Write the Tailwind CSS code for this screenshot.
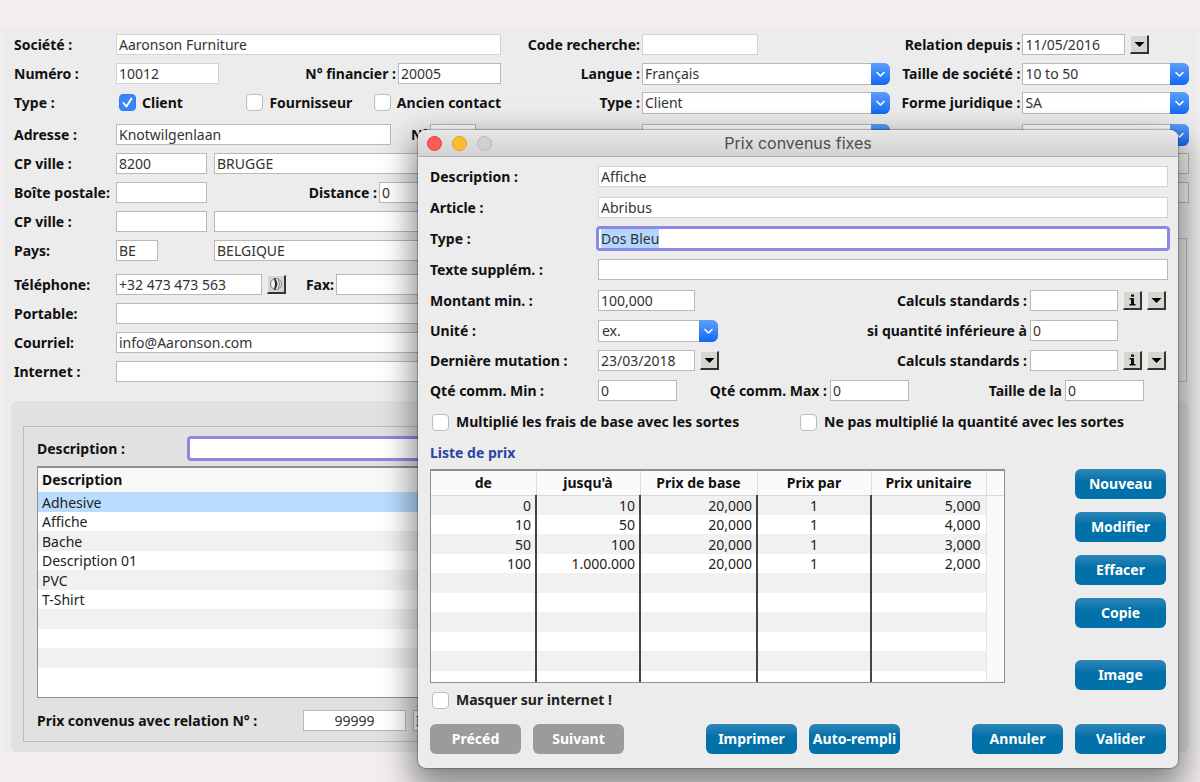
<!DOCTYPE html>
<html lang="fr">
<head>
<meta charset="utf-8">
<title>Prix convenus fixes</title>
<script src="https://cdn.jsdelivr.net/npm/@tailwindcss/browser@4"></script>
</head>
<body class="relative min-h-screen overflow-x-hidden bg-[#f2eeef] pt-7 font-['Noto_Sans',sans-serif] text-[14px] leading-5 text-[#111]">
<svg class="hidden">
  <symbol id="chev" viewBox="0 0 19 21"><path d="M6 9l3.500 3.500L13 9" fill="none" stroke="#fff" stroke-width="1.600" stroke-linecap="round" stroke-linejoin="round"/></symbol>
  <symbol id="down" viewBox="0 0 16 16"><path d="M3.500 6h10l-5 5z" fill="#000"/></symbol>
  <symbol id="info" viewBox="0 0 16 16"><path d="M7 2.500h3v2.200H7zM5.500 6H10v6h1.500v1.500h-6V12H7V7.500H5.500z" fill="#111"/></symbol>
  <symbol id="phone" viewBox="0 0 16 16"><circle cx="8" cy="8" r="5.500" fill="#f4f4f0" stroke="#777" stroke-width="1"/><path d="M6.500 2.500q5 5.500 0 11q2.200-5.500 0-11z" fill="#222" stroke="#222"/><path d="M10.500 4q2 4 0 8" stroke="#777" fill="none"/></symbol>
</svg>

<main class="mx-[2px] rounded-sm bg-[#ececec] px-[9px] pt-[6px] pb-[1px]">
  <form class="flex pl-[3px]">
    <section class="flex w-[487px] flex-none flex-col gap-2">
      <div class="flex h-[21px] items-center"><label for="soc" class="w-[102px] flex-none font-bold">Société :</label><input id="soc" value="Aaronson Furniture" class="h-[21px] w-full min-w-0 border border-[#d4d4d4] bg-white pl-[2px] text-[#333]"></div>
      <div class="flex h-[21px] items-center"><label for="num" class="w-[102px] flex-none font-bold">Numéro :</label><input id="num" value="10012" class="h-[21px] w-[103px] border border-[#d4d4d4] bg-white pl-[2px] text-[#333]"><label for="fin" class="ml-auto pr-[2px] font-bold">N° financier :</label><input id="fin" value="20005" class="h-[21px] w-[103px] border border-[#b8b8b8] bg-white pl-[2px] text-[#333]"></div>
      <div class="flex h-[21px] items-center font-bold"><span class="w-[105px] flex-none">Type :</span>
        <label class="flex w-[129px] items-center gap-1.5"><span class="relative flex"><input type="checkbox" checked class="size-[17px] appearance-none rounded border border-[#bcbcbc] bg-white checked:border-[#2f7bf5] checked:bg-[#3a85f8]"><svg viewBox="0 0 17 17" class="pointer-events-none absolute inset-0 size-[17px]"><path d="M4.500 9l3 3.500 5-8" fill="none" stroke="#fff" stroke-width="1.800" stroke-linecap="round" stroke-linejoin="round"/></svg></span>Client</label>
        <label class="flex w-[129px] items-center gap-1.5"><input type="checkbox" class="size-[17px] appearance-none rounded border border-[#bcbcbc] bg-white">Fournisseur</label>
        <label class="flex items-center gap-1.5 whitespace-nowrap"><input type="checkbox" class="size-[17px] flex-none appearance-none rounded border border-[#bcbcbc] bg-white">Ancien contact</label></div>

      <div class="mt-[3px] flex h-[21px] items-center"><label for="adr" class="w-[102px] flex-none font-bold">Adresse :</label><input id="adr" value="Knotwilgenlaan" class="h-[21px] w-[275px] border border-[#b8b8b8] bg-white pl-[2px] text-[#333]"><label for="no" class="ml-5 w-[19px] font-bold">N°</label><input id="no" class="h-[21px] w-[46px] border border-[#b8b8b8] bg-white"></div>
      <div class="flex h-[21px] items-center"><label for="cp1" class="w-[102px] flex-none font-bold">CP ville :</label><input id="cp1" value="8200" class="h-[21px] w-[91px] border border-[#b8b8b8] bg-white pl-[2px] text-[#333]"><input aria-label="Ville" value="BRUGGE" class="ml-[7px] h-[21px] min-w-0 flex-1 border border-[#b8b8b8] bg-white pl-[2px] text-[#333]"></div>
      <div class="flex h-[21px] items-center"><label for="bp" class="w-[102px] flex-none whitespace-nowrap font-bold">Boîte postale:</label><input id="bp" class="h-[21px] w-[91px] border border-[#b8b8b8] bg-white"><label for="dist" class="ml-auto pr-[2px] font-bold">Distance :</label><input id="dist" value="0" class="h-[21px] w-[122px] border border-[#b8b8b8] bg-white pl-[2px] text-[#333]"></div>
      <div class="flex h-[21px] items-center"><label for="cp2" class="w-[102px] flex-none font-bold">CP ville :</label><input id="cp2" class="h-[21px] w-[91px] border border-[#b8b8b8] bg-white"><input aria-label="Ville 2" class="ml-[7px] h-[21px] min-w-0 flex-1 border border-[#b8b8b8] bg-white"></div>
      <div class="flex h-[21px] items-center"><label for="pays" class="w-[102px] flex-none font-bold">Pays:</label><input id="pays" value="BE" class="h-[21px] w-[42px] border border-[#b8b8b8] bg-white pl-[2px] text-[#333]"><input aria-label="Nom du pays" value="BELGIQUE" class="ml-14 h-[21px] min-w-0 flex-1 border border-[#b8b8b8] bg-white pl-[2px] text-[#333]"></div>

      <div class="mt-[5px] flex h-[21px] items-center"><label for="tel" class="w-[102px] flex-none font-bold">Téléphone:</label><input id="tel" value="+32 473 473 563" class="h-[21px] w-[146px] border border-[#b8b8b8] bg-white pl-[2px] text-[#333]"><button type="button" aria-label="Appeler" class="ml-[5px] size-[19px] flex-none border-t border-r-2 border-b-2 border-l border-t-[#eee] border-r-[#333] border-b-[#333] border-l-[#eee] bg-[#d6d6d0]"><svg class="size-4"><use href="#phone"/></svg></button><label for="fax" class="ml-auto pr-[2px] font-bold">Fax:</label><input id="fax" class="h-[21px] w-[165px] border border-[#b8b8b8] bg-white"></div>
      <div class="flex h-[21px] items-center"><label for="port" class="w-[102px] flex-none font-bold">Portable:</label><input id="port" class="h-[21px] min-w-0 flex-1 border border-[#b8b8b8] bg-white"></div>
      <div class="flex h-[21px] items-center"><label for="mail" class="w-[102px] flex-none font-bold">Courriel:</label><input id="mail" value="info@Aaronson.com" class="h-[21px] min-w-0 flex-1 border border-[#b8b8b8] bg-white pl-[2px] text-[#333]"></div>
      <div class="flex h-[21px] items-center"><label for="web" class="w-[102px] flex-none font-bold">Internet :</label><input id="web" class="h-[21px] min-w-0 flex-1 border border-[#b8b8b8] bg-white"></div>
    </section>

    <section class="flex min-w-0 flex-1 flex-col">
      <div class="grid grid-cols-[390fr_299fr] gap-y-2">
        <div class="flex h-[21px] items-center"><label for="code" class="w-[141px] flex-none pr-[2px] text-right font-bold">Code recherche:</label><input id="code" class="h-[21px] w-[116px] border border-[#d4d4d4] bg-white"></div>
        <div class="flex h-[21px] items-center"><label for="rel" class="w-[132px] flex-none pr-[2px] text-right font-bold">Relation depuis :</label><input id="rel" value="11/05/2016" class="h-[21px] w-[103px] border border-[#b8b8b8] bg-white pl-[2px] text-[#333]"><button type="button" aria-label="Choisir la date" class="ml-[5px] size-[19px] border-t border-r-2 border-b-2 border-l border-t-[#eee] border-r-[#333] border-b-[#333] border-l-[#eee] bg-[#d6d6d0]"><svg class="size-4"><use href="#down"/></svg></button></div>
        <div class="flex h-[21px] items-center"><label for="lang" class="w-[141px] flex-none pr-[2px] text-right font-bold">Langue :</label><div class="relative flex-1"><select id="lang" class="block h-[22px] w-full appearance-none rounded-r-md border border-[#b8b8b8] bg-white pl-[2px] text-[#333]"><option>Français</option></select><svg class="pointer-events-none absolute top-0 right-0 h-[22px] w-[19px] rounded-r-md bg-linear-to-b from-[#5a9ffa] to-[#0f68f6]"><use href="#chev"/></svg></div></div>
        <div class="flex h-[21px] items-center"><label for="taille" class="w-[132px] flex-none pr-[2px] text-right font-bold">Taille de société :</label><div class="relative flex-1"><select id="taille" class="block h-[22px] w-full appearance-none rounded-r-md border border-[#b8b8b8] bg-white pl-[2px] text-[#333]"><option>10 to 50</option></select><svg class="pointer-events-none absolute top-0 right-0 h-[22px] w-[19px] rounded-r-md bg-linear-to-b from-[#5a9ffa] to-[#0f68f6]"><use href="#chev"/></svg></div></div>
        <div class="flex h-[21px] items-center"><label for="type" class="w-[141px] flex-none pr-[2px] text-right font-bold">Type :</label><div class="relative flex-1"><select id="type" class="block h-[22px] w-full appearance-none rounded-r-md border border-[#b8b8b8] bg-white pl-[2px] text-[#333]"><option>Client</option></select><svg class="pointer-events-none absolute top-0 right-0 h-[22px] w-[19px] rounded-r-md bg-linear-to-b from-[#5a9ffa] to-[#0f68f6]"><use href="#chev"/></svg></div></div>
        <div class="flex h-[21px] items-center"><label for="forme" class="w-[132px] flex-none pr-[2px] text-right font-bold">Forme juridique :</label><div class="relative flex-1"><select id="forme" class="block h-[22px] w-full appearance-none rounded-r-md border border-[#b8b8b8] bg-white pl-[2px] text-[#333]"><option>SA</option></select><svg class="pointer-events-none absolute top-0 right-0 h-[22px] w-[19px] rounded-r-md bg-linear-to-b from-[#5a9ffa] to-[#0f68f6]"><use href="#chev"/></svg></div></div>
      </div>
      <div class="mt-[11px] grid grid-cols-[390fr_299fr] gap-y-2">
        <div class="relative ml-[141px] h-[21px]"><select aria-label="Liste 1" class="block h-[22px] w-full appearance-none rounded-r-md border border-[#b8b8b8] bg-white"><option></option></select><svg class="pointer-events-none absolute top-0 right-0 h-[22px] w-[19px] rounded-r-md bg-linear-to-b from-[#5a9ffa] to-[#0f68f6]"><use href="#chev"/></svg></div>
        <div class="relative ml-[132px] h-[21px]"><select aria-label="Liste 2" class="block h-[22px] w-full appearance-none rounded-r-md border border-[#b8b8b8] bg-white"><option></option></select><svg class="pointer-events-none absolute top-0 right-0 h-[22px] w-[19px] rounded-r-md bg-linear-to-b from-[#5a9ffa] to-[#0f68f6]"><use href="#chev"/></svg></div>
        <input aria-label="Champ 1" class="ml-[141px] h-[21px] min-w-0 border border-[#b8b8b8] bg-white"><input aria-label="Champ 2" class="ml-[132px] h-[21px] min-w-0 border border-[#b8b8b8] bg-[#f4f4f4]">
        <input aria-label="Champ 3" class="ml-[141px] h-[21px] min-w-0 border border-[#b8b8b8] bg-white"><input aria-label="Champ 4" class="ml-[132px] h-[21px] min-w-0 border border-[#b8b8b8] bg-[#f4f4f4]">
      </div>
      <div class="mt-[35px] mr-[2px] ml-6 flex-1 border border-[#bdbdbd]"></div>
    </section>
  </form>

  <section class="mt-[19px] rounded-md bg-[#e1e1e1] px-3 pt-[25px] pb-[10px]">
    <div class="border border-[#bdbdbd] px-[13px] pt-[9px] pb-[10px]">
      <div class="flex items-center"><label for="desc0" class="w-[150px] flex-none font-bold">Description :</label><input id="desc0" class="h-[25px] min-w-0 flex-1 rounded border-3 border-[#8c88e6] bg-white"></div>
      <div class="mt-[5px] border border-t-2 border-[#8f8f8f] bg-white pb-[29px]">
        <table class="w-full border-collapse text-left text-[#222]">
          <thead><tr class="h-6 bg-[#f8f8f8]"><th class="p-0 pl-1 font-bold text-[#111]">Description</th></tr></thead>
          <tbody>
            <tr class="h-5 bg-[#b9dcff]"><td class="p-0 pl-1 leading-[19px]">Adhesive</td></tr>
            <tr class="h-[19px]"><td class="p-0 pl-1 leading-[19px]">Affiche</td></tr>
            <tr class="h-5 bg-[#f1f1f1]"><td class="p-0 pl-1 leading-[19px]">Bache</td></tr>
            <tr class="h-[19px]"><td class="p-0 pl-1 leading-[19px]">Description 01</td></tr>
            <tr class="h-5 bg-[#f1f1f1]"><td class="p-0 pl-1 leading-[19px]">PVC</td></tr>
            <tr class="h-[19px]"><td class="p-0 pl-1 leading-[19px]">T-Shirt</td></tr>
            <tr class="h-5 bg-[#f1f1f1]"><td></td></tr>
            <tr class="h-[19px]"><td></td></tr>
            <tr class="h-5 bg-[#f1f1f1]"><td></td></tr>
          </tbody>
        </table>
      </div>
      <div class="mt-3 flex h-[21px] items-center"><label for="prel" class="w-[266px] flex-none font-bold">Prix convenus avec relation N° :</label><input id="prel" value="99999" class="h-[21px] w-[103px] border border-[#b8b8b8] bg-white text-center text-[#333]"><input aria-label="Nom de la relation" value="IMPRIMERIE" class="ml-[7px] h-[21px] w-60 border border-[#b8b8b8] bg-white pl-[2px]"></div>
    </div>
  </section>
</main>

<div role="dialog" aria-labelledby="dt" class="absolute top-[130px] right-[22px] left-[418px] rounded-lg bg-[#ececec] shadow-[0_0_1px_1px_rgba(0,0,0,0.25),0_14px_32px_6px_rgba(0,0,0,0.45)]">
  <header class="relative flex h-[27px] items-center justify-center rounded-t-lg border-b border-[#b3b3b3] bg-linear-to-b from-[#e7e7e7] to-[#d2d2d2]">
    <div class="absolute left-[9px] flex gap-[10px]"><button aria-label="Fermer" class="size-[15px] rounded-full border border-[#e0443e] bg-[#fc5b57]"></button><button aria-label="Réduire" class="size-[15px] rounded-full border border-[#dfa023] bg-[#fbbc2e]"></button><button aria-label="Agrandir" class="size-[15px] rounded-full border border-[#b9b9b9] bg-[#d0d0d0]"></button></div>
    <h1 id="dt" class="font-['Inter',sans-serif] text-[16px] text-[#4d4d4d]">Prix convenus fixes</h1>
  </header>
  <div class="pt-[9px] pr-[10px] pb-[14px] pl-3">
    <div class="flex flex-col gap-[10px]">
      <div class="flex h-[21px] items-center"><label for="d1" class="w-[168px] flex-none font-bold">Description :</label><input id="d1" value="Affiche" class="h-[21px] min-w-0 flex-1 border border-[#d4d4d4] bg-white pl-[2px] text-[#333]"></div>
      <div class="flex h-[21px] items-center"><label for="d2" class="w-[168px] flex-none font-bold">Article :</label><input id="d2" value="Abribus" class="h-[21px] min-w-0 flex-1 border border-[#d4d4d4] bg-white pl-[2px] text-[#333]"></div>
      <div class="-mr-[2px] flex h-[21px] items-center"><label for="d3" class="w-[166px] flex-none font-bold">Type :</label><input id="d3" value="Dos Bleu" class="h-[25px] min-w-0 flex-1 rounded border-3 border-[#8c88e6] bg-white pl-[2px] text-[#333] outline-none selection:bg-[#b3d7ff] selection:text-[#333]"></div>
      <div class="flex h-[21px] items-center"><label for="d4" class="w-[168px] flex-none font-bold">Texte supplém. :</label><input id="d4" class="h-[21px] min-w-0 flex-1 border border-[#b8b8b8] bg-white"></div>
      <div class="flex h-[21px] items-center"><label for="d5" class="w-[168px] flex-none font-bold">Montant min. :</label><input id="d5" value="100,000" class="h-[21px] w-[97px] border border-[#b8b8b8] bg-white pl-[2px] text-[#333]"><label for="c1" class="ml-auto pr-[3px] font-bold">Calculs standards :</label><input id="c1" class="h-[21px] w-[88px] border border-[#b8b8b8] bg-white"><button aria-label="Information" class="ml-[5px] size-[19px] border-t border-r-2 border-b-2 border-l border-t-[#eee] border-r-[#333] border-b-[#333] border-l-[#eee] bg-[#d6d6d0]"><svg class="size-4"><use href="#info"/></svg></button><button aria-label="Ouvrir" class="mr-[2px] ml-[5px] size-[19px] border-t border-r-2 border-b-2 border-l border-t-[#eee] border-r-[#333] border-b-[#333] border-l-[#eee] bg-[#d6d6d0]"><svg class="size-4"><use href="#down"/></svg></button></div>
    </div>
    <div class="mt-[9px] flex flex-col gap-[9px]">
      <div class="flex h-[21px] items-center"><label for="d6" class="w-[168px] flex-none font-bold">Unité :</label><div class="relative w-[120px]"><select id="d6" class="block h-[22px] w-full appearance-none rounded-r-md border border-[#b8b8b8] bg-white pl-[3px] text-[#333]"><option>ex.</option></select><svg class="pointer-events-none absolute top-0 right-0 h-[22px] w-[19px] rounded-r-md bg-linear-to-b from-[#5a9ffa] to-[#0f68f6]"><use href="#chev"/></svg></div><label for="c2" class="ml-auto pr-[3px] font-bold">si quantité inférieure à</label><input id="c2" value="0" class="mr-[50px] h-[21px] w-[88px] border border-[#b8b8b8] bg-white pl-[2px] text-[#333]"></div>
      <div class="flex h-[21px] items-center"><label for="d7" class="w-[168px] flex-none font-bold">Dernière mutation :</label><input id="d7" value="23/03/2018" class="h-[21px] w-[97px] border border-[#b8b8b8] bg-white pl-[2px] text-[#333]"><button aria-label="Choisir la date" class="ml-[5px] size-[19px] border-t border-r-2 border-b-2 border-l border-t-[#eee] border-r-[#333] border-b-[#333] border-l-[#eee] bg-[#d6d6d0]"><svg class="size-4"><use href="#down"/></svg></button><label for="c3" class="ml-auto pr-[3px] font-bold">Calculs standards :</label><input id="c3" class="h-[21px] w-[88px] border border-[#b8b8b8] bg-white"><button aria-label="Information" class="ml-[5px] size-[19px] border-t border-r-2 border-b-2 border-l border-t-[#eee] border-r-[#333] border-b-[#333] border-l-[#eee] bg-[#d6d6d0]"><svg class="size-4"><use href="#info"/></svg></button><button aria-label="Ouvrir" class="mr-[2px] ml-[5px] size-[19px] border-t border-r-2 border-b-2 border-l border-t-[#eee] border-r-[#333] border-b-[#333] border-l-[#eee] bg-[#d6d6d0]"><svg class="size-4"><use href="#down"/></svg></button></div>
      <div class="flex h-[21px] items-center"><label for="d8" class="w-[168px] flex-none font-bold">Qté comm. Min :</label><input id="d8" value="0" class="h-[21px] w-[79px] border border-[#b8b8b8] bg-white pl-[2px] text-[#333]"><label for="d9" class="w-[153px] pr-[3px] text-right font-bold">Qté comm. Max :</label><input id="d9" value="0" class="h-[21px] w-[79px] border border-[#b8b8b8] bg-white pl-[2px] text-[#333]"><label for="d10" class="ml-auto pr-[3px] font-bold">Taille de la</label><input id="d10" value="0" class="mr-6 h-[21px] w-[79px] border border-[#b8b8b8] bg-white pl-[2px] text-[#333]"></div>
    </div>
    <div class="mt-[11px] flex pl-[2px] font-bold">
      <label class="flex w-[368px] flex-none items-center gap-[7px]"><input type="checkbox" class="size-[17px] appearance-none rounded border border-[#bcbcbc] bg-white">Multiplié les frais de base avec les sortes</label>
      <label class="flex items-center gap-[7px]"><input type="checkbox" class="size-[17px] appearance-none rounded border border-[#bcbcbc] bg-white">Ne pas multiplié la quantité avec les sortes</label>
    </div>
    <h2 class="mt-[11px] font-bold text-[#2a45a4]">Liste de prix</h2>
    <div class="mt-[6px] flex items-start justify-between pr-[2px]">
      <div class="w-[575px] border border-t-2 border-[#8f8f8f] bg-white">
        <table class="w-full table-fixed border-collapse text-right text-[#222]">
          <colgroup><col class="w-[105px]"><col class="w-[104px]"><col class="w-[117px]"><col class="w-[114px]"><col class="w-[115px]"><col></colgroup>
          <thead><tr class="h-6 border-b border-[#d8d8d8] bg-[#fafafa] text-center text-[#111]"><th class="border-r border-[#ddd] p-0">de</th><th class="border-r border-[#ddd] p-0">jusqu'à</th><th class="border-r border-[#ddd] p-0">Prix de base</th><th class="border-r border-[#ddd] p-0">Prix par</th><th class="border-r border-[#ddd] p-0">Prix unitaire</th><th class="p-0"></th></tr></thead>
          <tbody class="leading-[19px]">
            <tr class="h-5 bg-[#f1f1f1]"><td class="border-r-2 border-[#444] p-0 pr-1">0</td><td class="border-r-2 border-[#444] p-0 pr-1">10</td><td class="border-r-2 border-[#444] p-0 pr-1">20,000</td><td class="border-r-2 border-[#444] p-0 text-center">1</td><td class="p-0 pr-[5px]">5,000</td><td rowspan="10" class="border-l border-[#e4e4e4] bg-[#fafafa] p-0"></td></tr>
            <tr class="h-[19px]"><td class="border-r-2 border-[#444] p-0 pr-1">10</td><td class="border-r-2 border-[#444] p-0 pr-1">50</td><td class="border-r-2 border-[#444] p-0 pr-1">20,000</td><td class="border-r-2 border-[#444] p-0 text-center">1</td><td class="p-0 pr-[5px]">4,000</td></tr>
            <tr class="h-5 bg-[#f1f1f1]"><td class="border-r-2 border-[#444] p-0 pr-1">50</td><td class="border-r-2 border-[#444] p-0 pr-1">100</td><td class="border-r-2 border-[#444] p-0 pr-1">20,000</td><td class="border-r-2 border-[#444] p-0 text-center">1</td><td class="p-0 pr-[5px]">3,000</td></tr>
            <tr class="h-[19px]"><td class="border-r-2 border-[#444] p-0 pr-1">100</td><td class="border-r-2 border-[#444] p-0 pr-1">1.000.000</td><td class="border-r-2 border-[#444] p-0 pr-1">20,000</td><td class="border-r-2 border-[#444] p-0 text-center">1</td><td class="p-0 pr-[5px]">2,000</td></tr>
            <tr class="h-5 bg-[#f1f1f1]"><td class="border-r-2 border-[#444] p-0"></td><td class="border-r-2 border-[#444] p-0"></td><td class="border-r-2 border-[#444] p-0"></td><td class="border-r-2 border-[#444] p-0"></td><td class="p-0"></td></tr>
            <tr class="h-[19px]"><td class="border-r-2 border-[#444] p-0"></td><td class="border-r-2 border-[#444] p-0"></td><td class="border-r-2 border-[#444] p-0"></td><td class="border-r-2 border-[#444] p-0"></td><td class="p-0"></td></tr>
            <tr class="h-5 bg-[#f1f1f1]"><td class="border-r-2 border-[#444] p-0"></td><td class="border-r-2 border-[#444] p-0"></td><td class="border-r-2 border-[#444] p-0"></td><td class="border-r-2 border-[#444] p-0"></td><td class="p-0"></td></tr>
            <tr class="h-[19px]"><td class="border-r-2 border-[#444] p-0"></td><td class="border-r-2 border-[#444] p-0"></td><td class="border-r-2 border-[#444] p-0"></td><td class="border-r-2 border-[#444] p-0"></td><td class="p-0"></td></tr>
            <tr class="h-5 bg-[#f1f1f1]"><td class="border-r-2 border-[#444] p-0"></td><td class="border-r-2 border-[#444] p-0"></td><td class="border-r-2 border-[#444] p-0"></td><td class="border-r-2 border-[#444] p-0"></td><td class="p-0"></td></tr>
            <tr class="h-[11px]"><td class="border-r-2 border-[#444] p-0"></td><td class="border-r-2 border-[#444] p-0"></td><td class="border-r-2 border-[#444] p-0"></td><td class="border-r-2 border-[#444] p-0"></td><td class="p-0"></td></tr>
          </tbody>
        </table>
      </div>
      <div class="flex w-[91px] flex-col gap-[13px] font-bold text-white">
        <button class="h-[30px] rounded-md bg-linear-to-b from-[#2b88b7] to-[#0271a9] to-40%">Nouveau</button>
        <button class="h-[30px] rounded-md bg-linear-to-b from-[#2b88b7] to-[#0271a9] to-40%">Modifier</button>
        <button class="h-[30px] rounded-md bg-linear-to-b from-[#2b88b7] to-[#0271a9] to-40%">Effacer</button>
        <button class="h-[30px] rounded-md bg-linear-to-b from-[#2b88b7] to-[#0271a9] to-40%">Copie</button>
        <button class="mt-[19px] h-[30px] rounded-md bg-linear-to-b from-[#2b88b7] to-[#0271a9] to-40%">Image</button>
      </div>
    </div>
    <label class="flex items-center gap-[7px] pl-[2px] font-bold text-[#222]"><input type="checkbox" class="size-[17px] appearance-none rounded border border-[#bcbcbc] bg-white">Masquer sur internet !</label>
    <div class="mt-[14px] flex gap-3 pr-[2px] font-bold text-white">
      <button class="h-[30px] w-[91px] rounded-md bg-[#9b9b9b]">Précéd</button>
      <button class="h-[30px] w-[91px] rounded-md bg-[#9b9b9b]">Suivant</button>
      <button class="ml-[70px] h-[30px] w-[91px] rounded-md bg-linear-to-b from-[#2b88b7] to-[#0271a9] to-40%">Imprimer</button>
      <button class="h-[30px] w-[91px] rounded-md bg-linear-to-b from-[#2b88b7] to-[#0271a9] to-40% whitespace-nowrap">Auto-rempli</button>
      <button class="ml-auto h-[30px] w-[91px] rounded-md bg-linear-to-b from-[#2b88b7] to-[#0271a9] to-40%">Annuler</button>
      <button class="h-[30px] w-[91px] rounded-md bg-linear-to-b from-[#2b88b7] to-[#0271a9] to-40%">Valider</button>
    </div>
  </div>
</div>
<script>
  const field = document.getElementById('d3');
  field.focus();
  field.select();
</script>
</body>
</html>
